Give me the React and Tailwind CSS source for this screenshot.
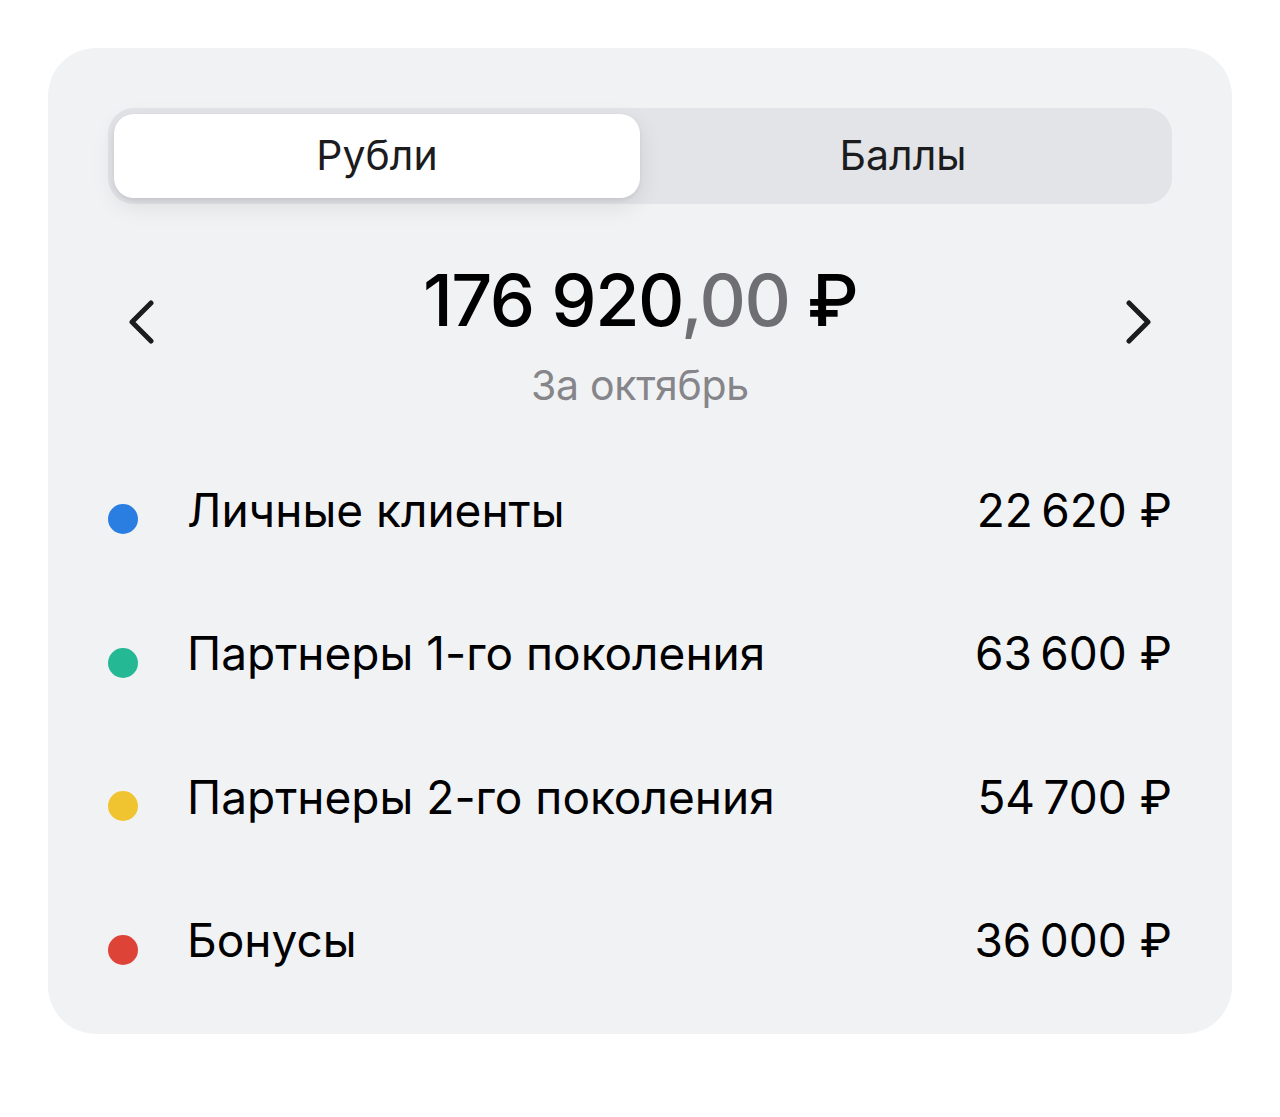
import React from "react";

const NS = "\u2009";
const rows = [
  { color: "bg-[#2a7de1]", label: "Личные клиенты", value: `22${NS}620 ₽` },
  { color: "bg-[#25b894]", label: "Партнеры 1-го поколения", value: `63${NS}600 ₽` },
  { color: "bg-[#f0c430]", label: "Партнеры 2-го поколения", value: `54${NS}700 ₽` },
  { color: "bg-[#dd4437]", label: "Бонусы", value: `36${NS}000 ₽` },
];

function Chevron({ dir }) {
  return (
    <svg width="36" height="44" viewBox="0 0 36 44" fill="none">
      {dir === "left" ? (
        <path d="M27 3 L8 22 L27 41" stroke="#1c1c1e" strokeWidth="5" strokeLinecap="round" strokeLinejoin="round" />
      ) : (
        <path d="M9 3 L28 22 L9 41" stroke="#1c1c1e" strokeWidth="5" strokeLinecap="round" strokeLinejoin="round" />
      )}
    </svg>
  );
}

export default function App() {
  return (
    <div className="w-[1280px] h-[1117px] bg-white pt-[48px] pl-[48px]" style={{ fontFamily: "Inter, 'Noto Sans', sans-serif" }}>
      <div className="w-[1184px] h-[986px] bg-[#f1f2f4] rounded-[48px] px-[60px] pt-[60px]">
        <div className="h-[96px] bg-[#e3e4e8] rounded-[26px] p-[6px] flex">
          <div className="flex-1 bg-white rounded-[20px] flex items-center justify-center text-[41px] text-[#1c1c1e] shadow-[0_8px_24px_rgba(0,0,0,0.09),0_2px_4px_rgba(0,0,0,0.07)]">
            Рубли
          </div>
          <div className="flex-1 flex items-center justify-center text-[41px] text-[#1c1c1e]">
            Баллы
          </div>
        </div>

        <div className="flex items-start justify-between mt-[54px]">
          <div className="w-[120px] flex justify-start pl-[16px] mt-[42px]">
            <Chevron dir="left" />
          </div>
          <div className="flex flex-col items-center">
            <div className="text-[72px] leading-[84px] font-medium text-[#000] tracking-[-1.5px]">
              176 920<span className="text-[#6e6e73]">,00</span> ₽
            </div>
            <div className="text-[41px] leading-[48px] text-[#85858a] mt-[19px] tracking-[-0.3px]">За октябрь</div>
          </div>
          <div className="w-[120px] flex justify-end pr-[16px] mt-[42px]">
            <Chevron dir="right" />
          </div>
        </div>

        <div className="mt-[29px] flex flex-col">
          {rows.map((r) => (
            <div key={r.label} className="h-[143.5px] flex items-center">
              <div className={`w-[30px] h-[30px] rounded-full ${r.color} mt-[19px]`} />
              <div className="ml-[49px] flex-1 text-[46px] leading-[56px] text-[#000]">{r.label}</div>
              <div className="text-[46px] leading-[56px] text-[#000]">{r.value}</div>
            </div>
          ))}
        </div>
      </div>
    </div>
  );
}
